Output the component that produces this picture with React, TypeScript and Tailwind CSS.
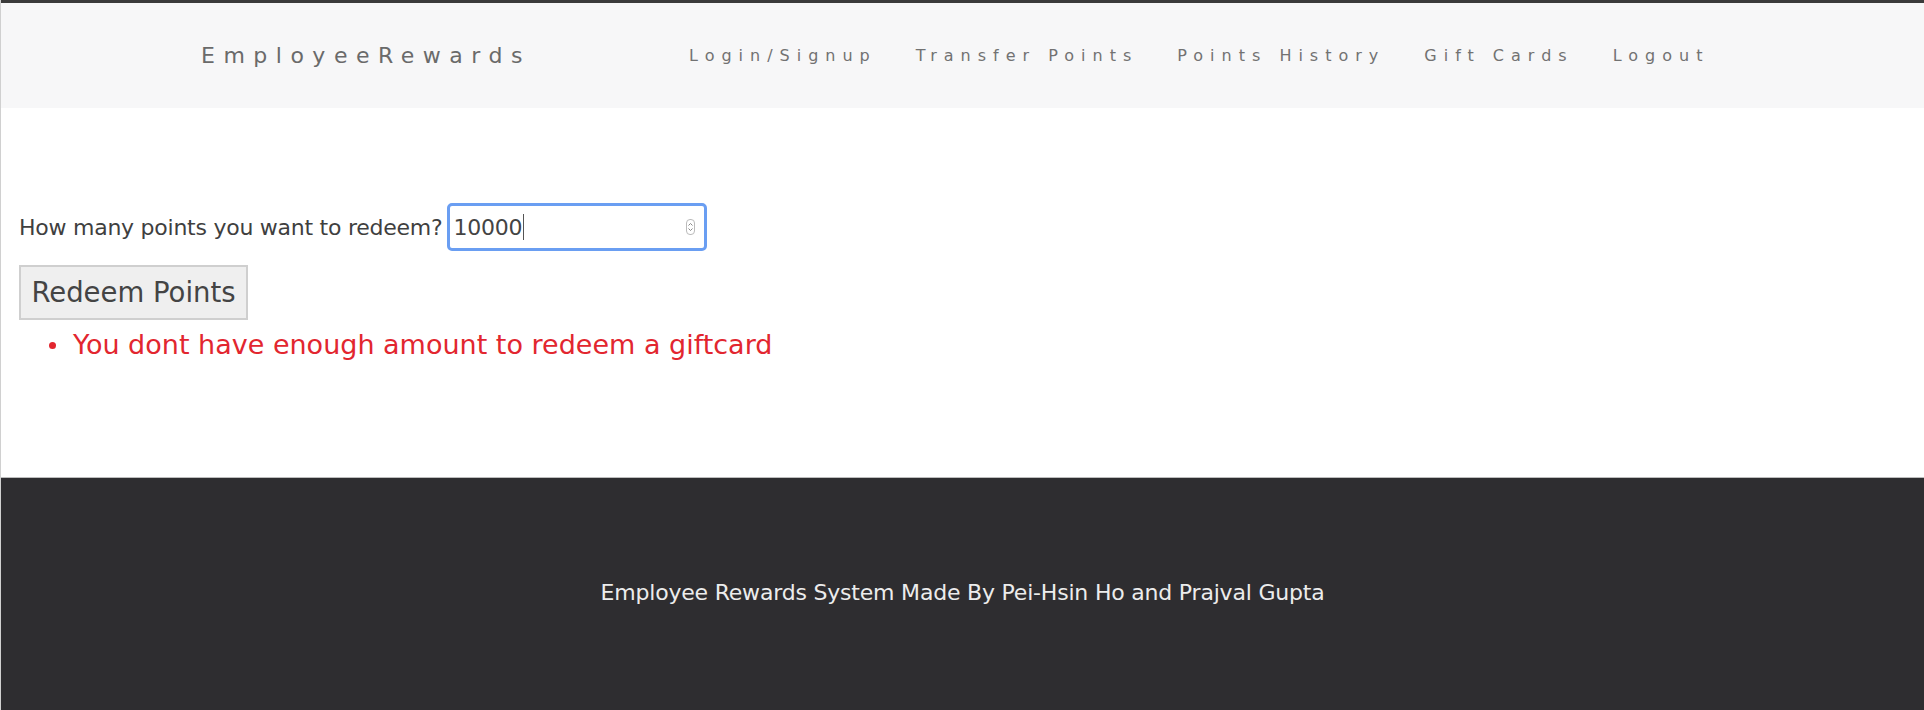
import React from "react";

export default function App() {
  const font = "font-['DejaVu_Sans','Noto_Sans',sans-serif]";
  const links = ["Login/Signup", "Transfer Points", "Points History", "Gift Cards", "Logout"];
  return (
    <div className={`${font} min-h-[710px] bg-white flex flex-col border-l border-[#d0d0d0]`}>
      <div className="h-[3px] bg-[#3b3b3b]" />
      <nav className="h-[105px] bg-[#f7f7f8] flex items-center pl-[200px]">
        <div className="w-[488px] whitespace-nowrap text-[22px] tracking-[8.5px] text-[#6a6a6a]">
          EmployeeRewards
        </div>
        <ul className="flex items-center gap-[39px]">
          {links.map((l) => (
            <li key={l} className="whitespace-nowrap text-[16px] tracking-[7px] text-[#727272]">
              {l}
            </li>
          ))}
        </ul>
      </nav>
      <main className="flex-1 pl-[18px] pt-[95px] h-[369px]">
        <div className="flex items-center gap-[5px]">
          <label className="whitespace-nowrap text-[22px] tracking-[-0.25px] text-[#3f3f3f]">
            How many points you want to redeem?
          </label>
          <div className="w-[260px] h-[48px] rounded-[5px] border-[3px] border-[#6a9ef2] bg-white flex items-center pl-[3px] pr-[9px]">
            <span className="text-[22px] tracking-[-0.25px] text-[#444]">10000</span>
            <span className="w-[1px] h-[26px] bg-[#555] ml-[1px]" />
            <span className="ml-auto flex flex-col items-center justify-center w-[9px] h-[16px] rounded-[4px] border border-[#bbb] text-[#888]">
              <svg width="7" height="12" viewBox="0 0 7 12" fill="none" stroke="#888" strokeWidth="1">
                <path d="M1.5 4.5 L3.5 2.5 L5.5 4.5" />
                <path d="M1.5 7.5 L3.5 9.5 L5.5 7.5" />
              </svg>
            </span>
          </div>
        </div>
        <button className="mt-[14px] w-[229px] h-[55px] bg-[#efefef] border-2 border-[#cfcfcf] text-[27.5px] text-[#444] flex items-center justify-center whitespace-nowrap">
          Redeem Points
        </button>
        <div className="mt-[3px] pl-[30px] h-[45px] flex items-center text-[#e2262f]">
          <span className="w-[7px] h-[7px] rounded-full bg-[#e2262f] shrink-0" />
          <span className="ml-[17px] text-[27px] whitespace-nowrap">
            You dont have enough amount to redeem a giftcard
          </span>
        </div>
      </main>
      <footer className="h-[233px] bg-[#2e2d30] flex items-center justify-center border-t border-[#bdbdbd]">
        <p className="text-[22px] tracking-[-0.2px] text-[#ececec] whitespace-nowrap mb-[4px]">
          Employee Rewards System Made By Pei-Hsin Ho and Prajval Gupta
        </p>
      </footer>
    </div>
  );
}
